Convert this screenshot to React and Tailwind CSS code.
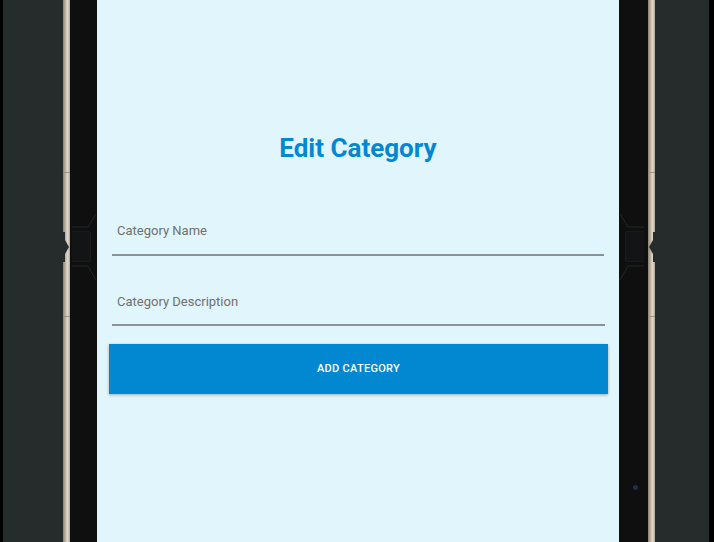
import React from "react";

function BezelButton({ side }) {
  const flip = side === "right";
  return (
    <svg width="27" height="90" viewBox="0 0 27 90" className="absolute left-0 top-[202px]" style={flip ? { transform: "scaleX(-1)" } : undefined}>
      <g stroke="#242627" strokeWidth="1" fill="none">
        <path d="M2 25 L18 25 L26 12" />
        <path d="M2 64 L18 64 L26 78" />
        <path d="M2 30 L20 30 L20 59 L2 59" />
      </g>
      <rect x="2" y="30" width="18" height="29" fill="#131415" />
    </svg>
  );
}

function Rim({ side }) {
  return (
    <div className="relative w-[7px] h-full bg-[linear-gradient(90deg,#8a8173,#c9c0b2_45%,#e2dbd0_70%,#a49b8c)]">
      <div className="absolute left-0 right-0 top-[172px] h-[1px] bg-[#9a9183]" />
      <div className="absolute left-0 right-0 top-[316px] h-[1px] bg-[#9a9183]" />
      <svg width="9" height="30" viewBox="0 0 9 30" className={side === "left" ? "absolute left-[0px] top-[232px]" : "absolute right-[0px] top-[232px]"}>
        {side === "left" ? (
          <path d="M0 0 L0 30 L2 30 L2 22 L6 15 L2 8 L2 0 Z" fill="#262c2c" />
        ) : (
          <path d="M9 0 L9 30 L7 30 L7 22 L3 15 L7 8 L7 0 Z" fill="#262c2c" />
        )}
      </svg>
    </div>
  );
}

export default function App() {
  return (
    <div className="flex w-[714px] h-[542px] overflow-hidden bg-black" style={{ fontFamily: "Roboto, 'Liberation Sans', sans-serif" }}>
      <div className="w-[3px] h-full bg-black" />
      <div className="w-[60px] h-full bg-[#262c2c]" />
      <Rim side="left" />
      <div className="relative w-[27px] h-full bg-[#0f0f0f]">
        <BezelButton side="left" />
      </div>

      <div className="w-[522px] h-full bg-[#e1f5fc] flex flex-col items-stretch pt-[133px]">
        <h1 className="text-center text-[26px] leading-[30px] font-bold text-[#0288d1]">Edit Category</h1>

        <div className="mx-[15px] mt-[60px]">
          <div className="pl-[5px] text-[13px] leading-[16px] text-[#707070]">Category Name</div>
          <div className="mt-[15px] h-[2px] bg-[#8b9296]" />
        </div>

        <div className="ml-[15px] mr-[14px] mt-[38px]">
          <div className="pl-[5px] text-[13px] leading-[16px] text-[#707070]">Category Description</div>
          <div className="mt-[14px] h-[2px] bg-[#8b9296]" />
        </div>

        <button className="ml-[12px] mr-[11px] mt-[18px] h-[50px] pt-[1px] bg-[#0288d1] text-white text-[11px] font-medium tracking-[0.3px] shadow-[0_1px_3px_rgba(0,0,0,0.3)]">
          ADD CATEGORY
        </button>
      </div>

      <div className="relative w-[29px] h-full bg-[#0f0f0f]">
        <BezelButton side="right" />
        <div className="absolute left-[14px] top-[485px] w-[5px] h-[5px] rounded-full bg-[#1b3048]" />
      </div>
      <Rim side="right" />
      <div className="w-[54px] h-full bg-[#262c2c]" />
      <div className="w-[5px] h-full bg-black" />
    </div>
  );
}
